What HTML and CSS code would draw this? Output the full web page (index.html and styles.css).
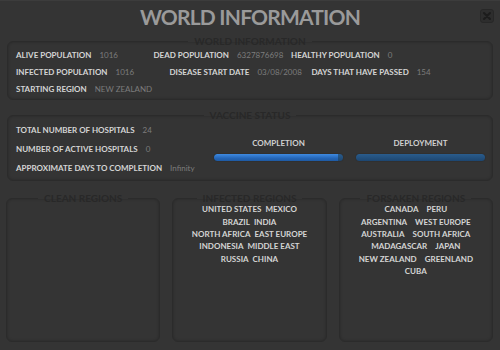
FILE: index.html
```html
<!DOCTYPE html>
<html lang="en">
<head>
  <meta charset="UTF-8" />
  <title>World Information</title>
  <link rel="stylesheet" href="styles.css">
</head>
<body>
  <div class="window">
    <header class="header">
      <h1 class="title">WORLD INFORMATION</h1>
      <button class="close-btn" aria-label="Close">
        <svg width="10" height="10" viewBox="0 0 10 10">
          <path d="M2 2 L8 8 M8 2 L2 8" stroke="#1c1c1c" stroke-width="2" stroke-linecap="round" />
        </svg>
      </button>
    </header>

    <!-- world stats -->
    <fieldset class="panel world">
      <legend>WORLD INFORMATION</legend>
      <div class="stat-row">
        <span class="label">ALIVE POPULATION</span><span class="value">1016</span>
        <span class="label">DEAD POPULATION</span><span class="value">6327876698</span>
        <span class="label">HEALTHY POPULATION</span><span class="value">0</span>
      </div>
      <div class="stat-row">
        <span class="label">INFECTED POPULATION</span><span class="value">1016</span>
        <span class="label">DISEASE START DATE</span><span class="value">03/08/2008</span>
        <span class="label">DAYS THAT HAVE PASSED</span><span class="value">154</span>
      </div>
      <div class="stat-row">
        <span class="label">STARTING REGION</span><span class="value">NEW ZEALAND</span>
      </div>
    </fieldset>

    <!-- vaccine -->
    <fieldset class="panel vaccine">
      <legend>VACCINE STATUS</legend>
      <div class="vaccine-body">
        <div class="vaccine-stats">
          <div class="vrow"><span class="label">TOTAL NUMBER OF HOSPITALS</span><span class="value">24</span></div>
          <div class="vrow"><span class="label">NUMBER OF ACTIVE HOSPITALS</span><span class="value">0</span></div>
          <div class="vrow"><span class="label">APPROXIMATE DAYS TO COMPLETION</span><span class="value">Infinity</span></div>
        </div>
        <div class="progress">
          <div class="bar-title">COMPLETION</div>
          <div class="bar"><div class="bar-fill" style="width: 96%"></div></div>
        </div>
        <div class="progress">
          <div class="bar-title">DEPLOYMENT</div>
          <div class="bar"><div class="bar-fill" style="width: 0%"></div></div>
        </div>
      </div>
    </fieldset>

    <!-- regions -->
    <div class="regions">
      <fieldset class="panel region">
        <legend>CLEAN REGIONS</legend>
      </fieldset>
      <fieldset class="panel region">
        <legend>INFECTED REGIONS</legend>
        <div class="rrow"><span>UNITED STATES</span><span>MEXICO</span></div>
        <div class="rrow"><span>BRAZIL</span><span>INDIA</span></div>
        <div class="rrow"><span>NORTH AFRICA</span><span>EAST EUROPE</span></div>
        <div class="rrow"><span>INDONESIA</span><span>MIDDLE EAST</span></div>
        <div class="rrow"><span>RUSSIA</span><span>CHINA</span></div>
      </fieldset>
      <fieldset class="panel region forsaken">
        <legend>FORSAKEN REGIONS</legend>
        <div class="rrow"><span>CANADA</span><span>PERU</span></div>
        <div class="rrow"><span>ARGENTINA</span><span>WEST EUROPE</span></div>
        <div class="rrow"><span>AUSTRALIA</span><span>SOUTH AFRICA</span></div>
        <div class="rrow"><span>MADAGASCAR</span><span>JAPAN</span></div>
        <div class="rrow"><span>NEW ZEALAND</span><span>GREENLAND</span></div>
        <div class="rrow"><span>CUBA</span></div>
      </fieldset>
    </div>
  </div>
</body>
</html>
```

FILE: styles.css
```css
body {
  margin: 0;
  padding: 0;
  background-color: #343434;
  font-family: Lato, "Liberation Sans", sans-serif;
  color: #d4d4d4;
}

.window {
  width: 500px;
  height: 350px;
  position: relative;
  box-sizing: border-box;
  border-top: 1px solid #3c3c3c;
  overflow: hidden;
}

.header {
  height: 31px;
  display: flex;
  justify-content: center;
  align-items: center;
}

.title {
  margin: 0;
  font-size: 21px;
  font-weight: bold;
  color: #9a9a9a;
  letter-spacing: -0.8px;
}

.close-btn {
  position: absolute;
  top: 8px;
  right: 6px;
  width: 14px;
  height: 14px;
  padding: 0;
  display: flex;
  align-items: center;
  justify-content: center;
  background: #2d2d2d;
  border: 1px solid #272727;
  border-radius: 3px;
  cursor: pointer;
}

.panel {
  margin: 0 7px;
  padding: 0 8px;
  border: 1px solid #2b2b2b;
  border-radius: 6px;
  box-shadow: inset 0 0 3px rgba(0, 0, 0, 0.25);
  min-width: 0;
}

.panel legend {
  margin: 0 auto;
  padding: 0 6px;
  font-size: 10px;
  line-height: 10px;
  font-weight: bold;
  color: #282828;
}

.label {
  font-size: 8px;
  font-weight: bold;
  color: #d4d4d4;
  white-space: nowrap;
  flex-shrink: 0;
}

.value {
  font-size: 8px;
  color: #7c7c7c;
  margin-left: 8px;
  white-space: nowrap;
  flex-shrink: 0;
}

/* world info */
.world {
  margin-top: 4px;
  padding-top: 0;
  padding-bottom: 2px;
}

.stat-row {
  display: flex;
  align-items: center;
  height: 17px;
}

.stat-row .value {
  min-width: 47px;
  margin-right: 7px;
}

/* vaccine */
.vaccine {
  margin-top: 10px;
  padding-bottom: 3px;
}

.vaccine-body {
  display: flex;
  align-items: flex-start;
  gap: 13px;
}

.vaccine-stats {
  width: 185px;
  flex-shrink: 0;
}

.vrow {
  height: 19px;
  display: flex;
  align-items: center;
}

.progress {
  width: 129px;
  flex-shrink: 0;
  padding-top: 17px;
  text-align: center;
}

.bar-title {
  font-size: 8px;
  font-weight: bold;
  color: #d0d0d0;
  height: 12px;
  line-height: 12px;
}

.bar {
  margin-top: 5px;
  height: 7px;
  border-radius: 4px;
  background: linear-gradient(#2a5c8c, #1d4670);
  box-shadow: 0 0 1px rgba(0, 0, 0, 0.6);
  overflow: hidden;
}

.bar-fill {
  height: 100%;
  border-radius: 4px 0 0 4px;
  background: linear-gradient(#3f8ae0, #2466b8 60%, #1f5aa2);
}

/* regions */
.regions {
  display: grid;
  grid-template-columns: 1fr 1fr 1fr;
  gap: 12px;
  margin: 12px 7px 0 6px;
}

.regions .panel {
  margin: 0;
  height: 149px;
  box-sizing: border-box;
  padding: 0 2px;
}

.rrow {
  display: flex;
  justify-content: center;
  gap: 4px;
  height: 12.4px;
  align-items: center;
  font-size: 8px;
  font-weight: bold;
  color: #d4d4d4;
  white-space: nowrap;
}

.forsaken .rrow {
  gap: 8px;
}
```
